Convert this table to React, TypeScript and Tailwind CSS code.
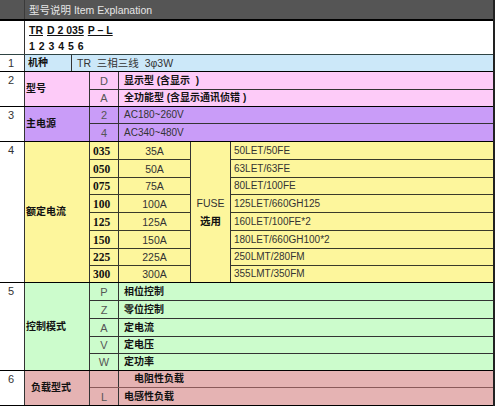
import React from 'react';

const line = 'border-[#333]';

type SubRow = { code?: string; text: string; h: string; bold?: boolean; indent?: boolean };

const Section: React.FC<{
  num: string;
  label: string;
  bg: string;
  labelPad?: string;
  rows: SubRow[];
  subLine?: string;
}> = ({ num, label, bg, labelPad = 'pl-[1px]', rows, subLine = line }) => (
  <div className={`flex border-b border-black ${bg}`}>
    <div className={`w-[25px] shrink-0 border-r ${line} bg-white pl-[8px] pt-[2px] text-[11px] leading-[12px] text-[#333]`}>
      {num}
    </div>
    <div className={`w-[65px] shrink-0 border-r ${line} flex items-center ${labelPad} font-bold text-[#111]`}>
      {label}
    </div>
    <div className="flex flex-1 flex-col">
      {rows.map((r, i) => (
        <div key={i} className={`flex ${r.h} ${i < rows.length - 1 ? `border-b ${subLine}` : ''}`}>
          <div className={`w-[29px] shrink-0 border-r ${line} flex items-center justify-center text-[11px] text-[#555]`}>
            {r.code}
          </div>
          <div
            className={`flex flex-1 items-center whitespace-pre ${r.indent ? 'pl-[15px]' : r.code ? 'pl-[5px]' : 'pl-[1px]'} ${
              r.bold ? 'font-bold text-[#111]' : 'text-[#333]'
            }`}
          >
            {r.text}
          </div>
        </div>
      ))}
    </div>
  </div>
);

const currents = [
  { code: '035', amp: '35A', fuse: '50LET/50FE', h: 'h-[18px]' },
  { code: '050', amp: '50A', fuse: '63LET/63FE', h: 'h-[18px]' },
  { code: '075', amp: '75A', fuse: '80LET/100FE', h: 'h-[17px]' },
  { code: '100', amp: '100A', fuse: '125LET/660GH125', h: 'h-[18px]' },
  { code: '125', amp: '125A', fuse: '160LET/100FE*2', h: 'h-[18px]' },
  { code: '150', amp: '150A', fuse: '180LET/660GH100*2', h: 'h-[18px]' },
  { code: '225', amp: '225A', fuse: '250LMT/280FM', h: 'h-[17px]' },
  { code: '300', amp: '300A', fuse: '355LMT/350FM', h: 'h-[16px]' },
];

export default function App() {
  return (
    <div className="min-h-[408px] bg-white">
      <div className="w-[495px] border-r-2 border-[#222] text-[10px] leading-[12px] text-[#222] font-['Liberation_Sans','Noto_Sans_CJK_SC',sans-serif]">
        {/* title bar */}
        <div className="flex h-[21px] border-b-2 border-black bg-[#555]">
          <div className="w-[25px] border-r border-[#3a3a3a]" />
          <div className="flex items-center pl-[4px] text-[10.5px] text-[#e6e6e6]">型号说明 Item Explanation</div>
        </div>

        {/* model code */}
        <div className="flex h-[34px] border-b border-[#2f4444]">
          <div className={`w-[25px] border-r ${line}`} />
          <div className="flex flex-col justify-center gap-[4px] pl-[4px] font-bold text-[10.5px] text-[#111]">
            <div className="flex gap-[4px]">
              <span className="underline">TR</span>
              <span className="underline">D 2 035</span>
              <span className="underline">P – L</span>
            </div>
            <div className="tracking-[0.5px]">1 2 3 4 5 6</div>
          </div>
        </div>

        {/* 1 */}
        <div className="flex h-[17px] border-b border-black bg-[#cce8f9]">
          <div className={`w-[25px] shrink-0 border-r ${line} bg-white pl-[8px] pt-[2px] text-[11px] leading-[12px] text-[#333]`}>1</div>
          <div className={`w-[47px] shrink-0 border-r ${line} flex items-center pl-[3px] font-bold text-[#111]`}>机种</div>
          <div className="flex items-center pl-[5px] text-[10.5px] text-[#333]">TR&nbsp; 三相三线&nbsp; 3φ3W</div>
        </div>

        <Section
          num="2"
          label="型号"
          bg="bg-[#fdcbf8]"
          rows={[
            { code: 'D', text: '显示型 (含显示  )', h: 'h-[18px]', bold: true },
            { code: 'A', text: '全功能型 (含显示通讯侦错 )', h: 'h-[16px]', bold: true },
          ]}
        />

        <Section
          num="3"
          label="主电源"
          bg="bg-[#c99cf8]"
          rows={[
            { code: '2', text: 'AC180~260V', h: 'h-[17px]' },
            { code: '4', text: 'AC340~480V', h: 'h-[17px]' },
          ]}
        />

        {/* 4 */}
        <div className="flex border-b border-black bg-[#fdf69c]">
          <div className={`w-[25px] shrink-0 border-r ${line} bg-white pl-[8px] pt-[2px] text-[11px] leading-[12px] text-[#333]`}>4</div>
          <div className={`w-[65px] shrink-0 border-r ${line} flex items-center pl-[1px] font-bold text-[#111]`}>额定电流</div>
          <div className="flex flex-col">
            {currents.map((c, i) => (
              <div key={c.code} className={`flex ${c.h} ${i < currents.length - 1 ? 'border-b border-[#3a3a2a]' : ''}`}>
                <div className={`w-[29px] border-r ${line} flex items-center pl-[3px] text-[11.5px] font-bold text-[#111] font-['Liberation_Serif',serif]`}>
                  {c.code}
                </div>
                <div className={`w-[72px] border-r ${line} flex items-center justify-center text-[10.5px] text-[#333]`}>{c.amp}</div>
              </div>
            ))}
          </div>
          <div className={`w-[40px] shrink-0 border-r ${line} flex flex-col items-center justify-center gap-[6px] text-[10.5px] text-[#333]`}>
            <span>FUSE</span>
            <span className="font-bold text-[#111]">选用</span>
          </div>
          <div className="flex flex-1 flex-col">
            {currents.map((c, i) => (
              <div key={c.code} className={`flex ${c.h} items-center pl-[3px] text-[#333] ${i < currents.length - 1 ? 'border-b border-[#3a3a2a]' : ''}`}>
                {c.fuse}
              </div>
            ))}
          </div>
        </div>

        <Section
          num="5"
          label="控制模式"
          bg="bg-[#ccfccc]"
          rows={[
            { code: 'P', text: '相位控制', h: 'h-[18px]', bold: true },
            { code: 'Z', text: '零位控制', h: 'h-[18px]', bold: true },
            { code: 'A', text: '定电流', h: 'h-[18px]', bold: true },
            { code: 'V', text: '定电压', h: 'h-[17px]', bold: true },
            { code: 'W', text: '定功率', h: 'h-[16px]', bold: true },
          ]}
        />

        <Section
          num="6"
          label="负载型式"
          bg="bg-[#e5b3b3]"
          labelPad="pl-[6px]"
          subLine="border-[#8a5a5a]"
          rows={[
            { code: '', text: '电阻性负载', h: 'h-[17px]', bold: true, indent: true },
            { code: 'L', text: '电感性负载', h: 'h-[17px]', bold: true },
          ]}
        />
      </div>
    </div>
  );
}
